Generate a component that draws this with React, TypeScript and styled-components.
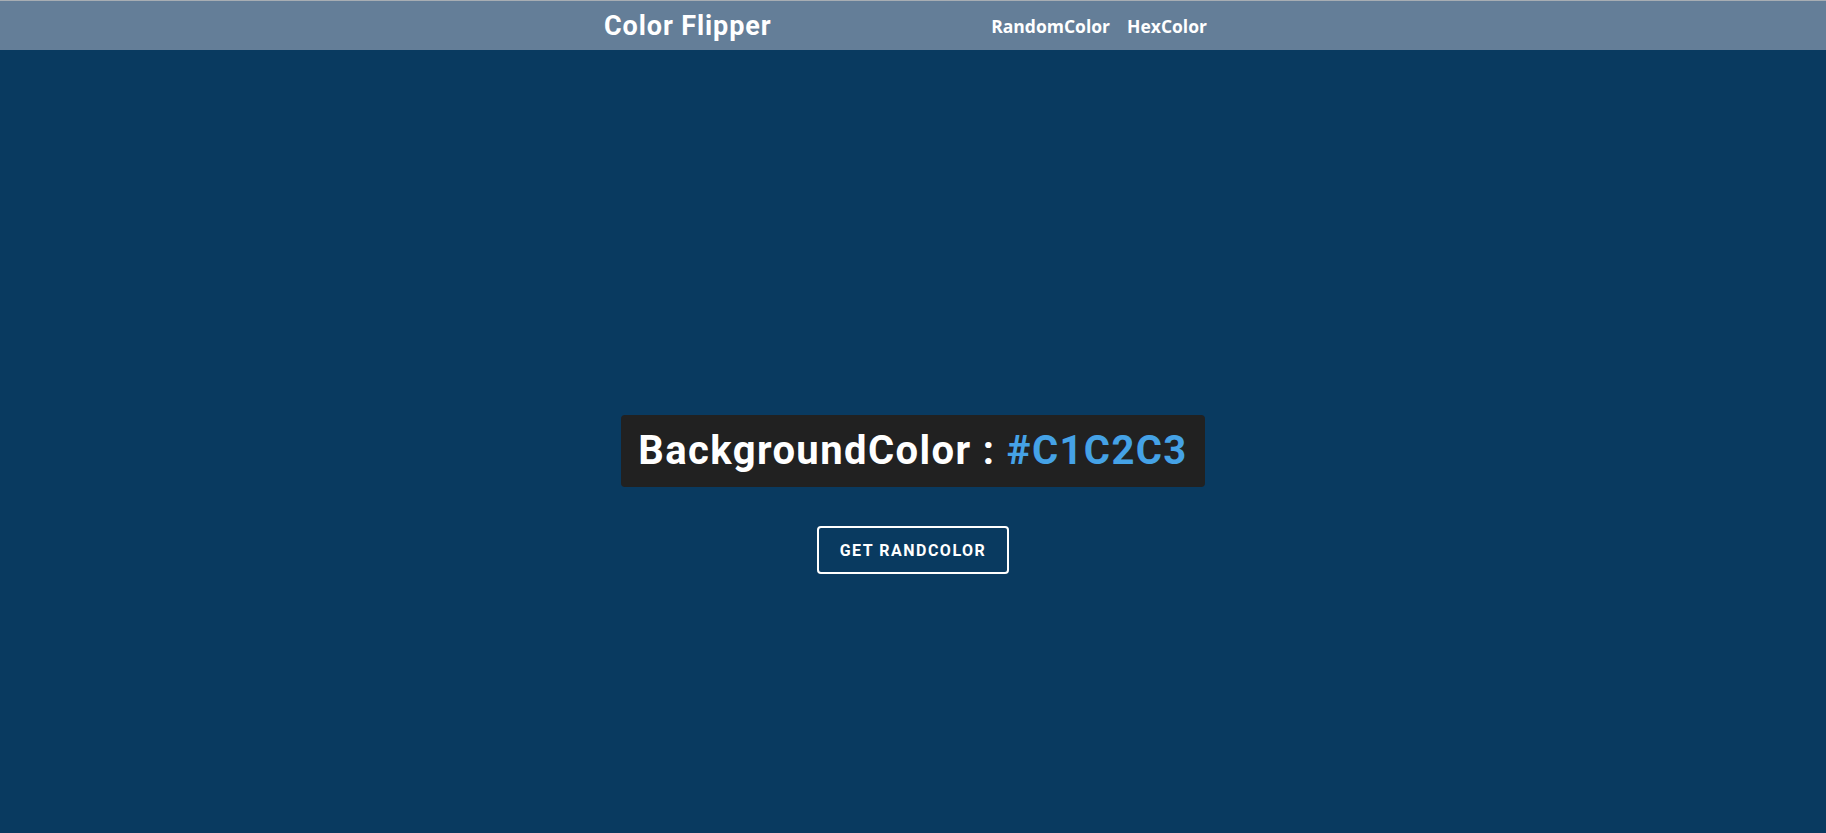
import React from "react";
import styled, { createGlobalStyle } from "styled-components";

const GlobalStyle = createGlobalStyle`
  html, body {
    margin: 0;
    padding: 0;
    background: #093a60;
    font-family: Roboto, "Liberation Sans", sans-serif;
  }
  * { box-sizing: border-box; }
`;

const Page = styled.div`
  min-height: 833px;
  background: #093a60;
  border-top: 1px solid #a7adb3;
`;

const NavBar = styled.header`
  height: 49px;
  background: #647e98;
  display: flex;
  align-items: center;
`;

const NavInner = styled.div`
  width: 603px;
  margin-left: calc(50% - 309px);
  display: flex;
  align-items: center;
  justify-content: space-between;
`;

const Title = styled.h1`
  margin: 0;
  font-family: Roboto, "Liberation Sans", sans-serif;
  font-weight: 700;
  font-size: 27px;
  color: #ffffff;
  letter-spacing: 0.9px;
`;

const Links = styled.nav`
  display: flex;
  gap: 17px;
`;

const NavLink = styled.a`
  font-family: "Open Sans", "Noto Sans", sans-serif;
  font-weight: 700;
  font-size: 17.5px;
  color: #ffffff;
  text-decoration: none;
  cursor: pointer;
`;

const Main = styled.main`
  display: flex;
  flex-direction: column;
  align-items: center;
  padding-top: 365px;
  gap: 39px;
`;

const ColorBox = styled.div`
  background: #212121;
  border-radius: 4px;
  padding: 16px 17px;
  font-family: Roboto, "Liberation Sans", sans-serif;
  font-weight: 700;
  font-size: 40px;
  line-height: 40px;
  letter-spacing: 1.4px;
  color: #ffffff;
  white-space: nowrap;
`;

const Hex = styled.span`
  color: #45a2e6;
`;

const Button = styled.button`
  height: 48px;
  padding: 0 21px;
  background: transparent;
  border: 2px solid #ffffff;
  border-radius: 4px;
  color: #ffffff;
  font-family: Roboto, "Liberation Sans", sans-serif;
  font-weight: 700;
  font-size: 16px;
  letter-spacing: 1.5px;
  text-transform: uppercase;
  cursor: pointer;
`;

export default function App() {
  return (
    <>
      <GlobalStyle />
      <Page>
        <NavBar>
          <NavInner>
            <Title>Color Flipper</Title>
            <Links>
              <NavLink>RandomColor</NavLink>
              <NavLink>HexColor</NavLink>
            </Links>
          </NavInner>
        </NavBar>
        <Main>
          <ColorBox>
            BackgroundColor : <Hex>#C1C2C3</Hex>
          </ColorBox>
          <Button>Get RandColor</Button>
        </Main>
      </Page>
    </>
  );
}
